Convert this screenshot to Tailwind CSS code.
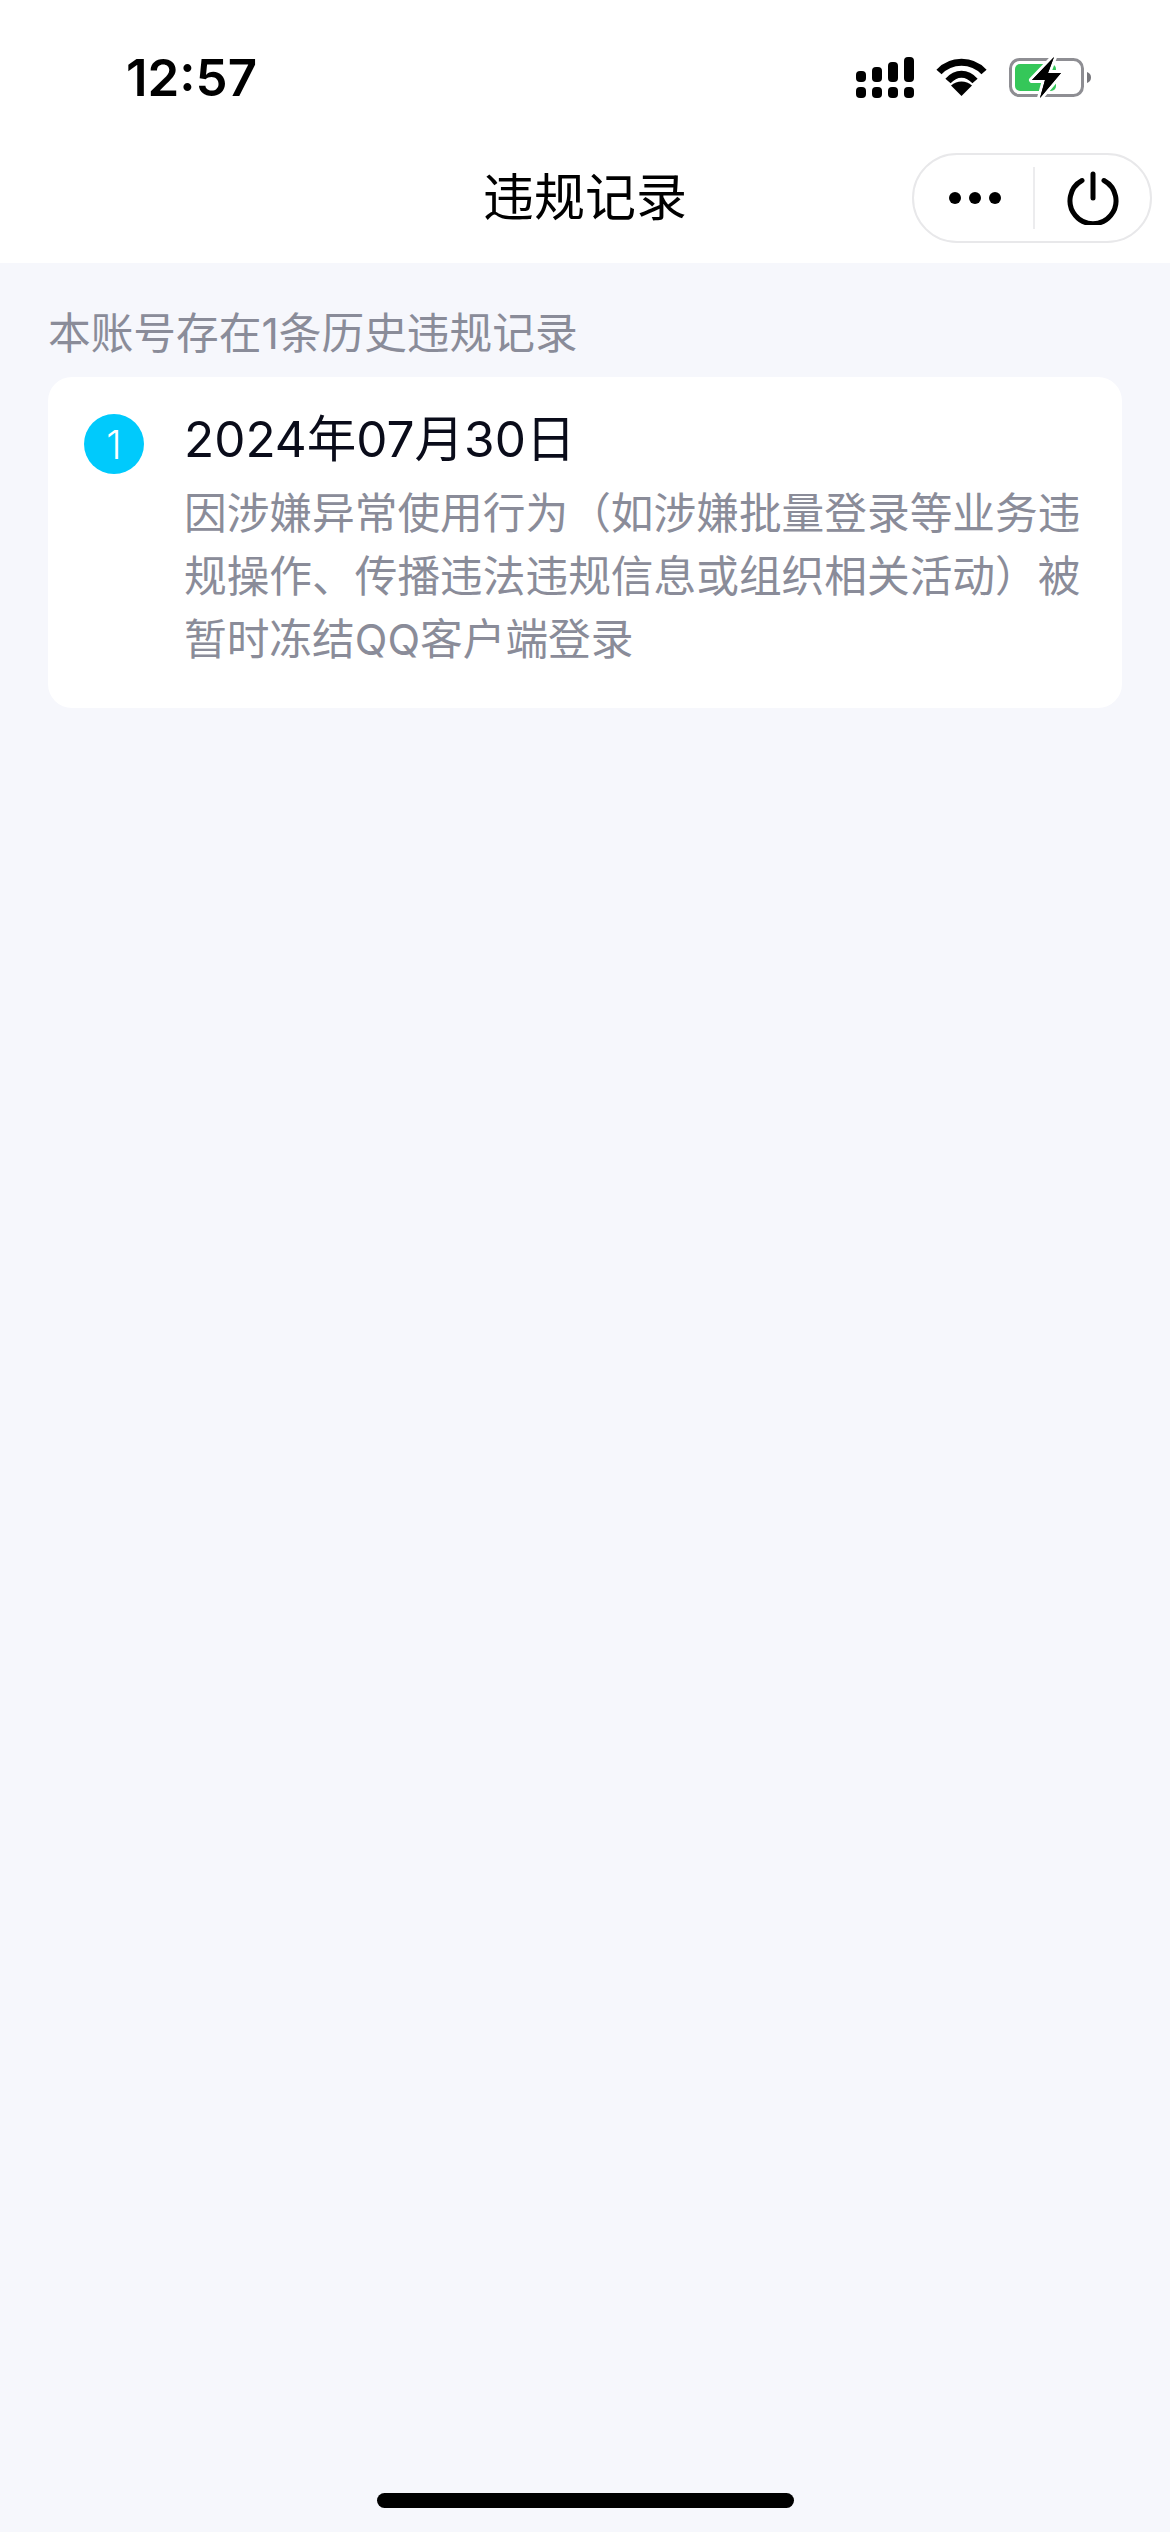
<!DOCTYPE html>
<html lang="zh-CN">
<head>
<meta charset="utf-8">
<script src="https://cdn.jsdelivr.net/npm/@tailwindcss/browser@4"></script>
</head>
<body class="m-0">
<div class="relative w-[1170px] h-[2532px] overflow-hidden bg-[#f6f7fc] font-['Inter','Noto_Sans_CJK_SC',sans-serif]">
  <header class="bg-white h-[263px] flex flex-col">
    <div class="h-[153px] pt-[57px] pl-[126px] pr-[77px] flex justify-between items-start">
      <span class="text-[51px] leading-[42px] font-semibold text-black">12:57</span>
      <div class="flex items-start gap-[22px]">
        <svg width="58" height="41" viewBox="0 0 58 41" class="block">
          <rect x="0" y="14" width="10" height="11" rx="4" fill="#000"/>
          <rect x="16" y="10" width="10" height="15" rx="4" fill="#000"/>
          <rect x="32" y="5" width="10" height="20" rx="4" fill="#000"/>
          <rect x="48" y="0" width="10" height="25" rx="4" fill="#000"/>
          <rect x="0" y="30" width="10" height="11" rx="4" fill="#000"/>
          <rect x="16" y="30" width="10" height="11" rx="4" fill="#000"/>
          <rect x="32" y="30" width="10" height="11" rx="4" fill="#000"/>
          <rect x="48" y="30" width="10" height="11" rx="4" fill="#000"/>
        </svg>
        <svg width="51" height="38" viewBox="0 0 51 38" class="mt-[1px] block">
          <path d="M3 14C15 1 36 1 48 14" fill="none" stroke="#000" stroke-width="7"/>
          <path d="M12 23C20 14 31 14 39 23" fill="none" stroke="#000" stroke-width="7"/>
          <path d="M25.500 38L15 27.500C21 22 30 22 36 27.500Z" fill="#000"/>
        </svg>
        <svg width="84" height="41" viewBox="0 0 84 41" class="block">
          <rect x="1.500" y="2.500" width="72" height="36" rx="9" fill="#fff" stroke="#8e8e93" stroke-width="3"/>
          <rect x="6" y="7" width="41" height="27" rx="5" fill="#35c759"/>
          <path d="M78 15C81 16 82 18 82 20.500C82 23 81 25 78 26Z" fill="#77777c"/>
          <path d="M45 0L23 23H36L31 41L52 16H39Z" fill="#000" stroke="#fff" stroke-width="6" stroke-linejoin="round" paint-order="stroke"/>
          <path d="M45 0L23 23H36L31 41L52 16H39Z" fill="#000"/>
        </svg>
      </div>
    </div>
    <div class="relative h-[90px] flex items-center justify-center">
      <span class="text-[51px] leading-[90px] text-black">违规记录</span>
      <div class="absolute left-[912px] top-0 w-[240px] h-[90px] rounded-full border-2 border-[#e8e8ea] bg-white flex items-center">
        <div class="w-[119px] flex justify-center gap-[8px] pl-[2px]">
          <span class="w-[12px] h-[12px] rounded-full bg-black"></span>
          <span class="w-[12px] h-[12px] rounded-full bg-black"></span>
          <span class="w-[12px] h-[12px] rounded-full bg-black"></span>
        </div>
        <div class="w-[2px] h-[62px] bg-[#ececee]"></div>
        <div class="flex-1 flex justify-center">
          <svg width="54" height="54" viewBox="0 0 54 54" class="block">
            <path d="M16 9.500A23 23 0 1 0 38 9.500" fill="none" stroke="#000" stroke-width="5" stroke-linecap="round"/>
            <path d="M27 3V27" fill="none" stroke="#000" stroke-width="5" stroke-linecap="round"/>
          </svg>
        </div>
      </div>
    </div>
  </header>
  <main class="px-[48px]">
    <p class="h-[114px] pt-[45px] text-[42.7px] leading-[52px] text-[#8a8c99]">本账号存在1条历史违规记录</p>
    <section class="bg-white rounded-[24px] h-[331px] pl-[36px] pr-[36px] pt-[34px] flex gap-[40px]">
      <div class="shrink-0 w-[60px] h-[60px] mt-[3px] rounded-full bg-[#00cafc] flex items-center justify-center text-white text-[39px] font-light leading-none">1</div>
      <div class="flex-1">
        <h2 class="text-[49.5px] leading-[56px] font-normal text-[#0a0c1a]">2024年07月30日</h2>
        <p class="mt-[15px] text-[42.7px] leading-[63px] text-[#8a8c99]">因涉嫌异常使用行为（如涉嫌批量登录等业务违规操作、传播违法违规信息或组织相关活动）被暂时冻结QQ客户端登录</p>
      </div>
    </section>
  </main>
  <div class="absolute left-[377px] top-[2493px] w-[417px] h-[15px] rounded-[8px] bg-black"></div>
</div>
</body>
</html>
